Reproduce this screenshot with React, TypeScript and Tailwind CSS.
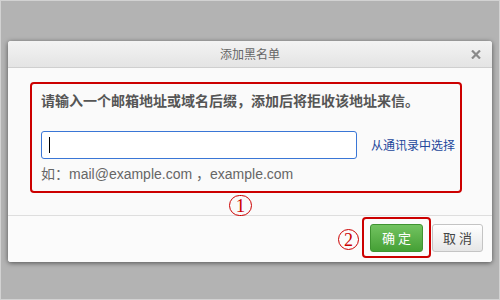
const cjk = "font-['Noto_Sans_CJK_SC',sans-serif]"

function Mark({ n, className }: { n: string; className?: string }) {
  return (
    <span
      className={`flex items-center justify-center rounded-full border-[1.5px] border-[#cc0000] text-[#cc0000] font-['Liberation_Serif',serif] leading-none ${className ?? ''}`}
    >
      {n}
    </span>
  )
}

export default function App() {
  return (
    <div className={`w-[500px] h-[300px] bg-[#b3b3b3] border border-[#d2d2d2] pt-[40px] px-[7px] ${cjk}`}>
      <div className="relative w-[484px] h-[221px] rounded-[3px] bg-[#fbfbfb] shadow-[0_1px_5px_rgba(0,0,0,0.55)] flex flex-col overflow-hidden">
        {/* header */}
        <div className="relative h-[27px] shrink-0 border-b border-[#cfcfcf] bg-gradient-to-b from-[#f3f3f3] to-[#e4e4e4] flex items-center justify-center">
          <span className="text-[12px] text-[#666] leading-none">添加黑名单</span>
          <svg className="absolute right-[11px] top-[9px]" width="10" height="9" viewBox="0 0 10 9">
            <path d="M1 0.5 L9 8.5 M9 0.5 L1 8.5" stroke="#8a8a8a" strokeWidth="2.2" />
          </svg>
        </div>

        {/* body */}
        <div className="relative h-[147px] shrink-0 pt-[14px] pl-[22px] bg-[#fafafa]">
          <div className="w-[432px] h-[111px] border-2 border-[#cc0000] rounded-[4px] pt-[7px] pl-[9px]">
            <p className="text-[14px] font-bold text-[#555] leading-[18px]">
              请输入一个邮箱地址或域名后缀，添加后将拒收该地址来信。
            </p>
            <div className="mt-[22px] flex items-center">
              <div className="w-[316px] h-[28px] rounded-[3px] border border-[#3a76d6] bg-white flex items-center pl-[7px]">
                <span className="w-px h-[16px] bg-black" />
              </div>
              <span className="ml-[14px] text-[12px] text-[#23479a]">从通讯录中选择</span>
            </div>
            <p className="mt-[6px] text-[14px] leading-[18px] text-[#666] font-['Liberation_Sans','Noto_Sans_CJK_SC',sans-serif]">
              如：mail@example.com ，example.com
            </p>
          </div>
          <Mark n="1" className="absolute left-[221px] top-[127px] w-[23px] h-[21px] text-[19px]" />
        </div>

        {/* footer */}
        <div className="flex-1 border-t border-[#dedede] bg-[#fbfbfb] flex items-start justify-end pr-[9px] pt-px">
          <Mark n="2" className="mt-[12px] mr-[3px] w-[21px] h-[21px] text-[18px]" />
          <div className="h-[41px] border-2 border-[#cc0000] rounded-[4px] pt-[5px] px-[6px]">
            <button className="w-[53px] h-[28px] rounded-[3px] border border-[#3f9331] bg-gradient-to-b from-[#72c360] to-[#45a035] text-white text-[13px] tracking-[3px] pl-[3px]">
              确定
            </button>
          </div>
          <button className="ml-px mt-[7px] w-[51px] h-[28px] rounded-[3px] border border-[#c4c4c4] bg-gradient-to-b from-[#ffffff] to-[#e6e6e6] text-[#444] text-[13px] tracking-[3px] pl-[3px]">
            取消
          </button>
        </div>
      </div>
    </div>
  )
}
